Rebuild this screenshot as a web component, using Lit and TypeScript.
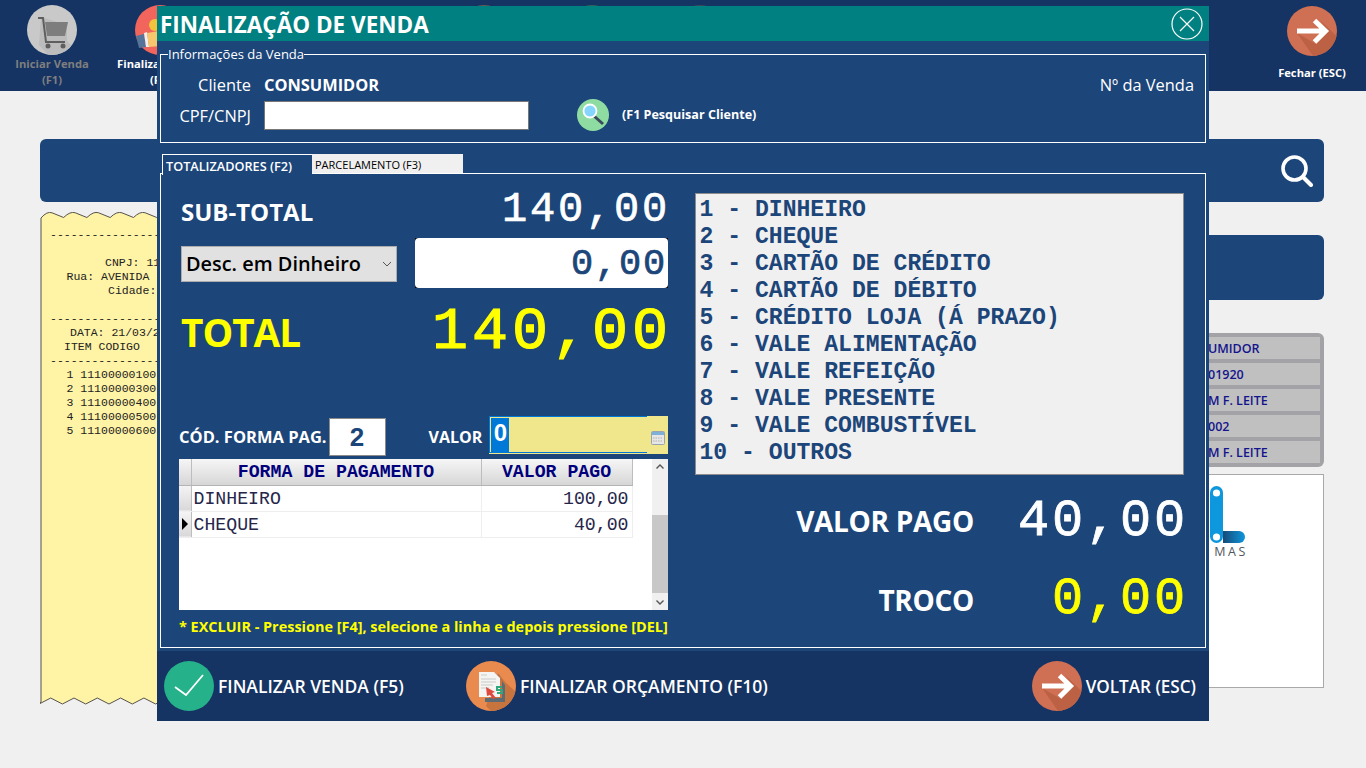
import { LitElement, html, css, svg } from "lit";
import { customElement } from "lit/decorators.js";

const shade = (id: string, r: number, pts: string, fill: string) => svg`
  <clipPath id=${id}><circle cx="25" cy="25" r=${r}></circle></clipPath>
  <polygon clip-path="url(#${id})" points=${pts} fill=${fill}></polygon>`;

const arrowIcon = (id: string) => html`<svg class="ic50" viewBox="0 0 50 50">
  <circle cx="25" cy="25" r="25" fill="#cf7054"></circle>
  ${shade(id, 25, "10,27 29,38 41,25 33,14 70,50 50,70 33,60", "#bd6145")}
  <path d="M5 25H33M22.500 14.500 33.500 25 22.500 36" transform="translate(5 0)" fill="none" stroke="#fff" stroke-width="5"></path>
</svg>`;

const cartIcon = html`<svg class="ic50" viewBox="0 0 50 50">
  <circle cx="25" cy="25" r="25" fill="#c9c9c9"></circle>
  ${shade("cs", 25, "14,12 40,20 40,36 60,56 40,70 12,40", "#bcbcbc")}
  <path d="M11 13h5l3 24h19" fill="none" stroke="#5e5e5e" stroke-width="2"></path>
  <polygon points="18,17 41,17 38,31 20,31" fill="#7d7d7d"></polygon>
  <circle cx="21" cy="41" r="2.5" fill="#5e5e5e"></circle><circle cx="36" cy="41" r="2.5" fill="#5e5e5e"></circle>
</svg>`;

const handIcon = html`<svg class="ic50" viewBox="0 0 50 50">
  <circle cx="25" cy="25" r="25" fill="#f1655c"></circle>
  <circle cx="20" cy="20" r="6" fill="#f3c33c"></circle>
  <polygon points="1,31 9,29 11,42 4,43" fill="#56739a"></polygon>
  <polygon points="9,28 12,27 14,42 11,42" fill="#eef0f2"></polygon>
  <path d="M12 28l12-2 16 3v9l-14 3-12 1z" fill="#f6c76c"></path>
</svg>`;

const checkIcon = html`<svg class="ic50" viewBox="0 0 50 50">
  <circle cx="25" cy="25" r="25" fill="#25b18a"></circle>
  <path d="M11 26 22 34 39 14" fill="none" stroke="#fff" stroke-width="1.800"></path>
</svg>`;

const docIcon = html`<svg class="ic50" viewBox="0 0 50 50">
  <circle cx="25" cy="25" r="25" fill="#e98a4e"></circle>
  ${shade("ds", 25, "32,12 40,22 70,50 45,70 20,45", "#c8743f")}
  <polygon points="13,12 29,12 36,19 36,37 19,37 19,41 39,41 39,24 32,14" fill="#5f6b72"></polygon>
  <polygon points="13,11 28,11 34,17 34,36 13,36" fill="#f4f4f2"></polygon>
  <path d="M15 14h6M15 18h15M15 21h15M15 24h12M15 27h8" stroke="#c9c9c9" stroke-width="1.2"></path>
  <polygon points="20,26 29,31 26,32 30,37 27,38 24,34 21,35" fill="#de4b3e"></polygon>
  <path d="M36 26h-5v3h5v3h-5" fill="none" stroke="#2fa77d" stroke-width="2"></path>
</svg>`;

const searchIcon = html`<svg class="s32" viewBox="0 0 32 32">
  <circle cx="13.5" cy="13.5" r="11.5" fill="none" stroke="#fff" stroke-width="3.6"></circle>
  <path d="M22 22 30 30" stroke="#fff" stroke-width="4" stroke-linecap="round"></path>
</svg>`;

const lensIcon = html`<svg class="s32" viewBox="0 0 32 32">
  <circle cx="16" cy="16" r="16" fill="#8fdca2"></circle>
  <path d="M17 17 26 25" stroke="#3a4a5c" stroke-width="3"></path>
  <circle cx="13" cy="12" r="6.5" fill="#86d5ff" stroke="#fff" stroke-width="1.8"></circle>
</svg>`;

const closeIcon = html`<svg class="s32" viewBox="0 0 32 32">
  <circle cx="16" cy="16" r="15" fill="none" stroke="#fff" stroke-width="1.2"></circle>
  <path d="M9 9 23 23M23 9 9 23" stroke="#fff" stroke-width="1.2"></path>
</svg>`;

const calIcon = html`<svg class="cal" viewBox="0 0 14 14">
  <rect x="0.5" y="0.5" width="13" height="13" rx="1" fill="#e6e6e6" stroke="#9aa4ae"></rect>
  <rect x="1" y="1" width="12" height="3" fill="#7fb0d8"></rect>
  <path d="M2 7h10M2 10h10" stroke="#b0b0b0" stroke-dasharray="1.5 1"></path>
</svg>`;

const wave = (w: number, h: number) => {
  const period = 23.3;
  let top = "M1 6";
  for (let x = 12; x < w; x += period) {
    top += `Q${x - 5} -1 ${x} 0.8 L${x + 11.6} 5.5`;
  }
  let bottom = "";
  for (let x = w; x > 0; x -= period) {
    bottom += `L${x} ${h - 7} L${x - 11.6} ${h - 1}`;
  }
  return `${top}L${w} 5 L${w} ${h - 5}${bottom}L1 ${h - 3}Z`;
};

const RECEIPT = [
  { t: "----------------", x: 10 },
  { t: "", x: 0 },
  { t: "CNPJ: 11", x: 65 },
  { t: "Rua: AVENIDA", x: 26.5 },
  { t: "Cidade:", x: 68 },
  { t: "", x: 0 },
  { t: "----------------", x: 10 },
  { t: "DATA: 21/03/2", x: 30 },
  { t: "ITEM CODIGO", x: 24 },
  { t: "----------------", x: 10 },
  { t: "1 11100000100", x: 26.5 },
  { t: "2 11100000300", x: 26.5 },
  { t: "3 11100000400", x: 26.5 },
  { t: "4 11100000500", x: 26.5 },
  { t: "5 11100000600", x: 26.5 },
];

const INFO = ["UMIDOR", "01920", "M F. LEITE", "002", "M F. LEITE"];

const PAY = [
  "1 - DINHEIRO",
  "2 - CHEQUE",
  "3 - CARTÃO DE CRÉDITO",
  "4 - CARTÃO DE DÉBITO",
  "5 - CRÉDITO LOJA (Á PRAZO)",
  "6 - VALE ALIMENTAÇÃO",
  "7 - VALE REFEIÇÃO",
  "8 - VALE PRESENTE",
  "9 - VALE COMBUSTÍVEL",
  "10 - OUTROS",
];

@customElement("app-root")
export class AppRoot extends LitElement {
  static styles = css`
    :host { display: block; position: relative; width: 1366px; height: 768px; overflow: hidden;
      background: #f0f0f0; font-family: "Open Sans", "Noto Sans", sans-serif; }
    * { box-sizing: border-box; }
    .ic50 { width: 50px; height: 50px; display: block; flex: none; }
    .s32 { width: 32px; height: 32px; display: block; flex: none; }
    .cal { width: 14px; height: 14px; display: block; }
    .mono { font-family: "Liberation Mono", monospace; font-weight: 700; }
    .num { font-family: "Liberation Mono", monospace; font-weight: 400; }
    .hid { visibility: hidden; }

    .top { height: 91px; background: #163463; display: flex; margin-left: -2px; }
    .nav { width: 108px; display: flex; flex-direction: column; align-items: center; padding-top: 5px;
      font-size: 11.2px; line-height: 16px; font-weight: 700; color: #fff; text-align: center; white-space: nowrap; }
    .nav .ic50 { margin-bottom: 1px; }
    .nav.off { color: #7f7f7f; }
    .nav.end { margin-left: auto; padding-top: 6px; }
    .nav.end .ic50 { margin-bottom: 9px; }
    .spot { width: 50px; height: 50px; border-radius: 50%; }
    .spot.a { background: #6e5a52; }
    .spot.b { background: #2d6a5a; }
    .spot.c { background: #3e4c58; }

    .main { padding: 48px 42px 0 40px; }
    .search { height: 63px; border-radius: 6px; background: #1c4579; display: flex; align-items: center;
      justify-content: flex-end; padding-right: 11px; }
    .work { display: flex; gap: 20px; margin-top: 10px; }
    .receipt { width: 500px; height: 493px; position: relative; flex: none; padding-top: 16px;
      font-family: "Liberation Mono", monospace; font-size: 11.5px; line-height: 14px; color: #222; }
    .receipt svg { position: absolute; left: 0; top: 0; width: 100%; height: 100%; }
    .receipt .ln { position: relative; height: 14px; white-space: pre; }
    .side { flex: 1; padding-top: 23px; }
    .bar { height: 65px; border-radius: 6px; background: #1c4579; }
    .grid { margin-top: 33px; height: 134px; background: #a3a3a7; border-radius: 6px; padding: 4px 4px 4px 0;
      display: flex; flex-direction: column; gap: 4px; }
    .grid div { height: 22px; background: #c0c0c0; color: #14148c; font-size: 12.5px; font-weight: 600; line-height: 24px;
      white-space: nowrap; padding-left: 648px; }
    .logo { margin-top: 7px; height: 214px; background: #fff; border: 1px solid #a9a9a9; position: relative; }
    .logo .brand { position: absolute; right: 78px; top: 11px; width: 40px; height: 72px; }
    .logo .mas { position: absolute; right: 75px; top: 70px; font-size: 12.5px; letter-spacing: 2.6px; color: #50565e; line-height: 14px; }

    .modal { position: absolute; left: 157px; top: 6px; width: 1052px; height: 715px; background: #1c4579;
      display: flex; flex-direction: column; color: #fff; }
    .title { height: 35px; background: #008080; display: flex; align-items: center; justify-content: space-between;
      padding: 0 6px 0 3px; font-size: 22.5px; font-weight: 700; flex: none; }
    .title span { padding-top: 2px; }
    fieldset { margin: 5px 3px 0 3px; padding: 0; border: 1px solid #fff; height: 97px; flex: none; min-width: 0; display: block; }
    legend { margin-left: 7px; padding: 1px 0 0; font-size: 13px; line-height: 15px; }
    .frow { display: flex; align-items: center; font-size: 16.4px; }
    .frow.a { height: 22px; margin-top: 11px; }
    .frow.b { height: 30px; margin-top: 5px; }
    .lab { width: 90px; text-align: right; margin-right: 13px; white-space: nowrap; }
    .name { font-weight: 700; font-size: 16.4px; }
    .cpf { width: 265px; height: 29px; background: #fff; border: 1px solid #777; }
    .frow .s32 { margin-left: 48px; margin-top: -1px; }
    .hint { font-size: 12.55px; font-weight: 700; margin-left: 13px; margin-top: -1px; }
    .nr { margin-left: auto; margin-right: 11px; }

    .tabs { display: flex; margin: 11px 3px 0 5px; height: 20px; flex: none; position: relative; z-index: 1; }
    .tab { height: 21px; width: 150px; border: 1px solid #fff; border-bottom: 0; border-right: 0; background: #1c4579;
      font-size: 12.7px; font-weight: 600; line-height: 22px; padding-left: 3px; white-space: nowrap; }
    .tab.off { height: 19px; width: 151px; border: 0; background: #f0f0f0; color: #000; font-weight: 400; font-size: 11px;
      line-height: 21px; }

    .panel { margin: -1px 3px 0; height: 475px; border: 1px solid #fff; flex: none; display: grid;
      grid-template-columns: 489px 489px; column-gap: 27px; padding-left: 18px; }
    .hd { display: flex; align-items: center; justify-content: space-between; padding-left: 2px; }
    .subrow { height: 44px; margin-top: 13px; }
    .subl { font-size: 24px; font-weight: 700; padding-top: 4px; }
    .subn { font-size: 42px; letter-spacing: 2.8px; line-height: 44px; margin: 1px -2px 0 0; -webkit-text-stroke: .7px #fff; }
    .disc { height: 50px; margin-top: 7px; }
    .sel { width: 216px; height: 36px; margin-top: 2px; background: #e1e1e1; border: 1px solid #adadad; color: #000; font-size: 19.9px;
      font-weight: 600; display: flex; align-items: center; justify-content: space-between; padding: 0 3px 2px 4px; white-space: nowrap; }
    .sel svg { width: 12px; height: 12px; margin-top: 2px; }
    .box { width: 253px; height: 50px; background: #000; }
    .box div { height: 100%; background: #fff; border-radius: 4px; color: #1c4579; text-align: right; font-size: 37px;
      letter-spacing: 1.8px; line-height: 52px; padding-right: 1px; -webkit-text-stroke: .7px #1c4579; }
    .totrow { height: 70px; margin-top: 10px; color: #ff0; }
    .totl { font-size: 38.7px; font-weight: 700; letter-spacing: -1px; margin-top: -3px; }
    .totn { font-size: 60px; letter-spacing: 4px; line-height: 70px; margin: -2px -4px 0 0; -webkit-text-stroke: 1.2px #ff0; }

    .payrow { display: flex; height: 40px; margin-top: 48px; align-items: flex-start; }
    .payl { font-size: 16.5px; font-weight: 700; line-height: 42px; white-space: nowrap; }
    .cod { width: 57px; height: 38px; margin: 2px 0 0 2px; background: #fff; border: 1px solid #8a8a8a; color: #1c4579;
      font-family: "Liberation Sans", sans-serif; font-weight: 700; font-size: 26px; line-height: 36px; text-align: center; flex: none; }
    .payl.v { font-size: 16px; margin-left: 43px; margin-right: 7px; }
    .val { flex: 1; height: 38px; background: #f0e68c; display: flex; justify-content: space-between; }
    .val .f { width: 158px; height: 37px; border: 1px solid #0078d7; border-right: 0; padding: 1px 0 0 1px; }
    .val .f span { display: block; width: 18px; height: 34px; background: #0078d7; color: #fff; font-family: "Liberation Sans", sans-serif;
      font-weight: 700; font-size: 24px; line-height: 30px; text-align: center; }
    .val .c { width: 20px; display: flex; align-items: center; justify-content: center; padding-top: 6px; }

    .table { margin-top: 3px; height: 151px; background: #fff; display: flex; }
    table { width: 453px; border-collapse: collapse; table-layout: fixed; align-self: flex-start;
      font-family: "Liberation Mono", monospace; font-size: 18.2px; color: #26264a; }
    th { height: 26px; padding: 0; font-weight: 700; color: #00007c; font-size: 18.2px;
      background: linear-gradient(#f6f6f6, #d6d6d6); border-right: 1px solid #bdbdbd; border-bottom: 1px solid #b4b4b4; }
    td { height: 26px; padding: 1px 3px 0 2px; border-right: 1px solid #eee; border-bottom: 1px solid #eee; white-space: nowrap; }
    td.r { text-align: right; }
    td.ind { padding: 0; background: linear-gradient(#f4f4f4, #d8d8d8); border-right: 1px solid #bdbdbd; font-size: 0; }
    .tri { width: 0; height: 0; margin-left: 3px; border-left: 6px solid #000; border-top: 6px solid transparent; border-bottom: 6px solid transparent; }
    .sb { margin-left: 19px; width: 16px; background: #f0f0f0; display: flex; flex-direction: column; align-items: center; }
    .sb svg { width: 16px; height: 16px; flex: none; }
    .sb .th { width: 16px; height: 78px; margin: 40px 0 1px; background: #c8c8c8; }
    .sb .sp { flex: 1; }
    .warn { margin-top: 7px; color: #ff0; font-size: 14.45px; font-weight: 700; line-height: 20px; white-space: nowrap; }

    .list { margin-top: 19px; height: 282px; background: #f0f0f0; border: 1px solid #8c8c8c; padding: 3px 0 0 3.5px;
      color: #1c4579; font-size: 23.1px; line-height: 27px; white-space: pre; }
    .res { display: flex; justify-content: flex-end; align-items: center; }
    .res .l { font-size: 28px; font-weight: 700; letter-spacing: -.3px; }
    .res .n { width: 210px; text-align: right; font-size: 52px; letter-spacing: 2.8px; line-height: 60px; margin-right: -4px; margin-left: 4px; }
    .res.p { margin-top: 15px; height: 62px; -webkit-text-stroke: .8px #fff; }
    .res.t { margin-top: 17px; height: 62px; color: #ff0; -webkit-text-stroke: .8px #ff0; }
    .res.t .l { color: #fff; -webkit-text-stroke: 0; }
    .res.p .l { -webkit-text-stroke: 0; }
    .res.p .n { padding-top: 2px; }

    .foot { flex: 1; background: #163463; margin-top: 3px; display: flex; align-items: center; padding: 0 13px 0 7px;
      font-size: 17.5px; font-weight: 600; white-space: nowrap; }
    .act { display: flex; align-items: center; gap: 4px; }
    .act.o { margin-left: 62px; }
    .act.e { margin-left: auto; font-size: 17.1px; }
  `;

  render() {
    return html`
      <div class="top">
        <div class="nav off">${cartIcon}<span>Iniciar Venda<br />(F1)</span></div>
        <div class="nav">${handIcon}<span>Finaliza<span class="hid">r Venda</span><br />(F<span class="hid">5)</span></span></div>
        <div class="nav"></div>
        <div class="nav"></div>
        <div class="nav"><div class="spot a"></div></div>
        <div class="nav"><div class="spot b"></div></div>
        <div class="nav"><div class="spot c"></div></div>
        <div class="nav end">${arrowIcon("a1")}<span>Fechar (ESC)</span></div>
      </div>
      <div class="main">
        <div class="search">${searchIcon}</div>
        <div class="work">
          <div class="receipt">
            <svg viewBox="0 0 500 493" preserveAspectRatio="none">
              <path d=${wave(500, 493)} fill="#fff3a6" stroke="#55524a" stroke-width="1"></path>
            </svg>
            ${RECEIPT.map((l) => html`<div class="ln" style="padding-left:${l.x}px">${l.t}</div>`)}
          </div>
          <div class="side">
            <div class="bar"></div>
            <div class="grid">${INFO.map((t) => html`<div>${t}</div>`)}</div>
            <div class="logo">
              <svg class="brand" viewBox="0 0 40 72">
                <defs>
                  <linearGradient id="lf">
                    <stop offset="0" stop-color="#174a78"></stop>
                    <stop offset="1" stop-color="#0d97dc"></stop>
                  </linearGradient>
                </defs>
                <path d="M18 45H34a6 6 0 0 1 0 12H18z" fill="url(#lf)"></path>
                <rect x="5" y="0" width="13" height="57" rx="6.5" fill="#0d97dc"></rect>
                <circle cx="11.500" cy="7" r="3.600" fill="#fff"></circle>
                <circle cx="11.500" cy="51" r="3.600" fill="#fff"></circle>
              </svg>
              <span class="mas">MAS</span>
            </div>
          </div>
        </div>
      </div>

      <div class="modal">
        <div class="title"><span>FINALIZAÇÃO DE VENDA</span>${closeIcon}</div>
        <fieldset>
          <legend>Informações da Venda</legend>
          <div class="frow a">
            <span class="lab">Cliente</span><span class="name">CONSUMIDOR</span>
            <span class="nr">Nº da Venda</span>
          </div>
          <div class="frow b">
            <span class="lab">CPF/CNPJ</span><div class="cpf"></div>
            ${lensIcon}<span class="hint">(F1 Pesquisar Cliente)</span>
          </div>
        </fieldset>
        <div class="tabs">
          <div class="tab">TOTALIZADORES (F2)</div>
          <div class="tab off">PARCELAMENTO (F3)</div>
        </div>
        <div class="panel">
          <div>
            <div class="hd subrow"><span class="subl">SUB-TOTAL</span><span class="num subn">140,00</span></div>
            <div class="hd disc">
              <div class="sel"><span>Desc. em Dinheiro</span>
                <svg viewBox="0 0 12 12"><path d="M2 4 6 8 10 4" fill="none" stroke="#555" stroke-width="1"></path></svg>
              </div>
              <div class="box"><div class="num">0,00</div></div>
            </div>
            <div class="hd totrow"><span class="totl">TOTAL</span><span class="num totn">140,00</span></div>
            <div class="payrow">
              <span class="payl">CÓD. FORMA PAG.</span><div class="cod">2</div>
              <span class="payl v">VALOR</span>
              <div class="val"><div class="f"><span>0</span></div><div class="c">${calIcon}</div></div>
            </div>
            <div class="table">
              <table>
                <colgroup><col style="width:12px" /><col style="width:290px" /><col style="width:151px" /></colgroup>
                <tr><th></th><th>FORMA DE PAGAMENTO</th><th>VALOR PAGO</th></tr>
                <tr><td class="ind"></td><td>DINHEIRO</td><td class="r">100,00</td></tr>
                <tr><td class="ind"><div class="tri"></div></td><td>CHEQUE</td><td class="r">40,00</td></tr>
              </table>
              <div class="sb">
                <svg viewBox="0 0 16 16"><path d="M4.500 9.500 8 6l3.500 3.500" fill="none" stroke="#555" stroke-width="1.400"></path></svg>
                <div class="th"></div>
                <div class="sp"></div>
                <svg viewBox="0 0 16 16"><path d="M4.500 6.500 8 10l3.500-3.500" fill="none" stroke="#555" stroke-width="1.400"></path></svg>
              </div>
            </div>
            <div class="warn">* EXCLUIR - Pressione [F4], selecione a linha e depois pressione [DEL]</div>
          </div>
          <div>
            <div class="list mono">${PAY.map((p) => html`<div>${p}</div>`)}</div>
            <div class="res p"><span class="l">VALOR PAGO</span><span class="num n">40,00</span></div>
            <div class="res t"><span class="l">TROCO</span><span class="num n">0,00</span></div>
          </div>
        </div>
        <div class="foot">
          <div class="act">${checkIcon}<span>FINALIZAR VENDA (F5)</span></div>
          <div class="act o">${docIcon}<span>FINALIZAR ORÇAMENTO (F10)</span></div>
          <div class="act e">${arrowIcon("a2")}<span>VOLTAR (ESC)</span></div>
        </div>
      </div>
    `;
  }
}
